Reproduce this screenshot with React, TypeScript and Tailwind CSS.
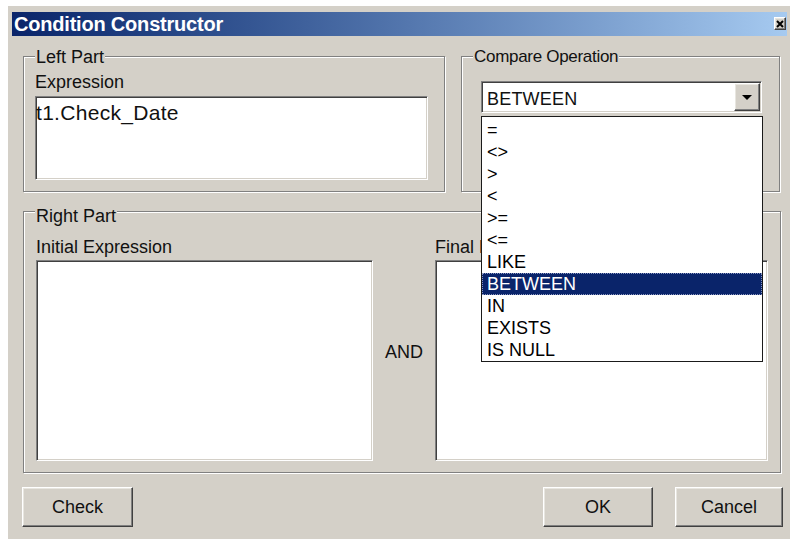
import React from "react";

const sunken =
  "border border-t-[#808080] border-l-[#808080] border-r-white border-b-white shadow-[inset_1px_1px_0_#404040,inset_-1px_-1px_0_#d4d0c8]";
const raised =
  "border border-t-white border-l-white border-r-[#404040] border-b-[#404040] shadow-[inset_-1px_-1px_0_#808080,inset_1px_1px_0_#e8e6e0]";
const etched = "border border-[#808080] shadow-[inset_1px_1px_0_#fff,1px_1px_0_#fff]";

const operations = ["=", "<>", ">", "<", ">=", "<=", "LIKE", "BETWEEN", "IN", "EXISTS", "IS NULL"];

function Button({ label, width }: { label: string; width: string }) {
  return (
    <div className={`${raised} ${width} h-[40px] flex items-center justify-center text-[18px] leading-[20px]`}>
      {label}
    </div>
  );
}

function OperationCombo() {
  const selected = "BETWEEN";
  return (
    <div className="relative ml-[19px] mt-[14px] w-[281px]">
      <div className={`${sunken} bg-white h-[32px] flex py-[1px] pr-[1px]`}>
        <div className="flex-1 pl-[5px] pt-[6px] text-[18px] leading-[20px] tracking-[0.2px]">{selected}</div>
        <div className={`${raised} bg-[#d4d0c8] w-[26px] h-[28px] flex items-center justify-center`}>
          <svg width="10" height="5" viewBox="0 0 10 5">
            <path d="M0 0 H10 L5 5 Z" fill="#000" />
          </svg>
        </div>
      </div>
      {/* open drop-down list */}
      <div className="absolute left-0 top-[35px] z-10 w-[282px] bg-white border border-[#1a1a1a] pt-[2px]">
        {operations.map((op) => (
          <div
            key={op}
            className={`h-[22px] pl-[5px] text-[18px] leading-[22px] ${
              op === selected
                ? "bg-[#0a246a] text-white outline-1 outline-dotted outline-[#8a96c0] -outline-offset-1"
                : "text-black"
            }`}
          >
            {op}
          </div>
        ))}
      </div>
    </div>
  );
}

export default function App() {
  return (
    <div className="min-h-screen bg-white pl-[7px] pt-[5px] font-['Liberation_Sans',Arial,sans-serif] text-[#111]">
      <div className="w-[783px] h-[534px] bg-[#d4d0c8] pl-[5px] pt-[7px] shadow-[inset_1px_1px_0_#fff]">
        {/* title bar */}
        <div className="w-[775px] h-[24px] flex bg-linear-to-r from-[#0a246a] to-[#a6caf0]">
          <div className="flex-1 pl-[2px] text-white font-bold text-[20px] leading-[24px] tracking-[-0.2px]">
            Condition Constructor
          </div>
          <div
            className={`${raised} bg-[#d4d0c8] mt-[5px] mr-[1px] w-[12px] h-[13px] flex items-center justify-center`}
          >
            <svg width="8" height="8" viewBox="0 0 8 8">
              <path d="M1 1 L7 7 M7 1 L1 7" stroke="#000" strokeWidth="2" />
            </svg>
          </div>
        </div>

        <div className="pl-[11px]">
          {/* upper group boxes */}
          <div className="flex mt-[20px]">
            <div className={`${etched} w-[422px] h-[136px]`}>
              <div className="-mt-[10px] ml-[11px] w-fit bg-[#d4d0c8] px-[1px] text-[18px] leading-[20px]">
                Left Part
              </div>
              <div className="ml-[11px] mt-[5px] text-[18px] leading-[20px]">Expression</div>
              <div className={`${sunken} bg-white ml-[11px] mt-[4px] w-[393px] h-[84px] pt-[4px] overflow-hidden`}>
                <div className="text-[21px] leading-[24px] tracking-[0.3px]">t1.Check_Date</div>
              </div>
            </div>

            <div className={`${etched} ml-[16px] w-[319px] h-[136px]`}>
              <div className="-mt-[10px] ml-[11px] w-fit bg-[#d4d0c8] px-[1px] text-[17px] leading-[20px] tracking-[-0.3px]">
                Compare Operation
              </div>
              <OperationCombo />
            </div>
          </div>

          {/* right part */}
          <div className={`${etched} mt-[19px] w-[758px] h-[262px]`}>
            <div className="-mt-[6px] ml-[11px] w-fit bg-[#d4d0c8] px-[1px] text-[18px] leading-[20px]">
              Right Part
            </div>
            <div className="flex ml-[12px] mt-[11px]">
              <div className="w-[337px]">
                <div className="text-[18px] leading-[20px]">Initial Expression</div>
                <div className={`${sunken} bg-white mt-[3px] h-[201px]`} />
              </div>
              <div className="w-[62px] flex justify-center">
                <div className="mt-[105px] text-[18px] leading-[20px]">AND</div>
              </div>
              <div className="w-[333px]">
                <div className="text-[18px] leading-[20px]">Final Expression</div>
                <div className={`${sunken} bg-white mt-[3px] h-[201px]`} />
              </div>
            </div>
          </div>

          {/* dialog buttons */}
          <div className="flex mt-[14px] -ml-[1px]">
            <Button label="Check" width="w-[111px]" />
            <div className="ml-[410px]">
              <Button label="OK" width="w-[110px]" />
            </div>
            <div className="ml-[22px]">
              <Button label="Cancel" width="w-[108px]" />
            </div>
          </div>
        </div>
      </div>
    </div>
  );
}
